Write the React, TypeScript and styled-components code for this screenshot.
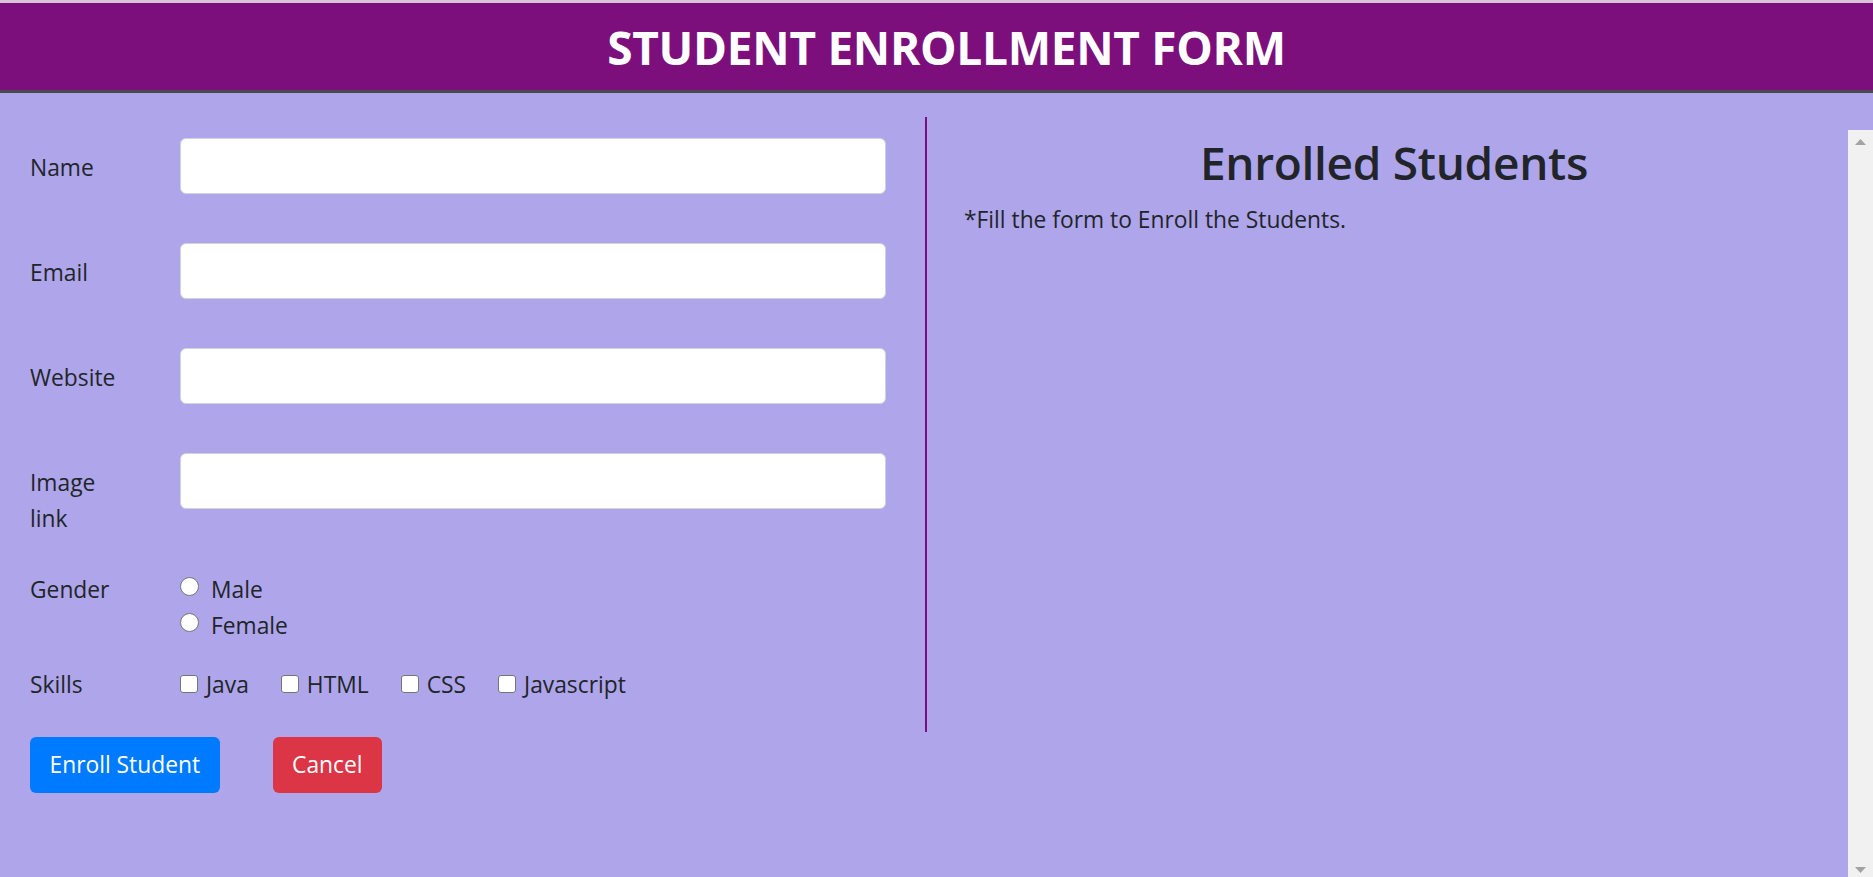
import React from "react";
import styled, { createGlobalStyle } from "styled-components";

const GlobalStyle = createGlobalStyle`
  html, body {
    margin: 0;
    padding: 0;
    background: #aea5ea;
  }
  body {
    font-family: "Open Sans", "Noto Sans", "Liberation Sans", sans-serif;
    color: #212529;
    font-size: 22.8px;
    line-height: 36px;
  }
  * { box-sizing: border-box; }
`;

const Page = styled.div`
  position: relative;
  min-height: 100vh;
  background: #aea5ea;
  overflow: hidden;
`;

const Header = styled.header`
  border-top: 3px solid #d6c6d9;
  border-bottom: 3px solid #4a4a4e;
  background: #7c0f7c;
  height: 93px;
  display: flex;
  align-items: center;
  justify-content: center;
  padding-left: 20px;
`;

const Title = styled.h1`
  margin: 0;
  color: #ffffff;
  font-size: 46px;
  font-weight: 700;
  line-height: 60px;
  letter-spacing: -0.3px;
`;

const Main = styled.main`
  display: flex;
  flex-direction: column;
  padding-top: 24px;
`;

const Columns = styled.div`
  display: flex;
  align-items: stretch;
`;

const FormColumn = styled.section`
  width: 927px;
  flex: none;
  border-right: 2.5px solid #7c0f7c;
  padding: 21px 39px 29px 30px;
  display: flex;
  flex-direction: column;
`;

const FieldRow = styled.div<{ $after: number }>`
  display: flex;
  align-items: flex-start;
  margin-bottom: ${(p) => p.$after}px;
`;

const Label = styled.label<{ $padTop?: number }>`
  width: 150px;
  flex: none;
  padding-top: ${(p) => (p.$padTop ?? 12)}px;
  padding-right: 52px;
  line-height: 36px;
`;

const TextInput = styled.input`
  flex: 1;
  height: 56px;
  border: 1.5px solid #ced4da;
  border-radius: 6px;
  background: #ffffff;
  font: inherit;
  padding: 0 18px;
  outline: none;
`;

const OptionStack = styled.div`
  display: flex;
  flex-direction: column;
`;

const OptionLine = styled.div`
  display: flex;
  align-items: flex-start;
`;

const Radio = styled.input.attrs({ type: "radio" })`
  appearance: none;
  -webkit-appearance: none;
  width: 19px;
  height: 19px;
  margin: 5px 12px 0 0;
  border: 1.5px solid #767676;
  border-radius: 50%;
  background: #ffffff;
  flex: none;
`;

const SkillList = styled.div`
  display: flex;
  align-items: flex-start;
  gap: 32px;
`;

const SkillItem = styled.label`
  display: flex;
  align-items: flex-start;
`;

const Checkbox = styled.input.attrs({ type: "checkbox" })`
  appearance: none;
  -webkit-appearance: none;
  width: 18px;
  height: 18px;
  margin: 8px 8px 0 0;
  border: 1.5px solid #767676;
  border-radius: 3px;
  background: #ffffff;
  flex: none;
`;

const OptionText = styled.span`
  line-height: 36px;
`;

const ListColumn = styled.section`
  flex: 1;
  padding: 16px 49px 0 37px;
`;

const ListTitle = styled.h2`
  margin: 0;
  text-align: center;
  font-size: 46px;
  font-weight: 600;
  line-height: 58px;
  letter-spacing: -0.3px;
`;

const Hint = styled.p`
  margin: 11px 0 0 0;
  line-height: 36px;
`;

const Actions = styled.div`
  display: flex;
  gap: 53px;
  padding: 5px 0 0 30px;
`;

const Button = styled.button<{ $variant: "primary" | "danger" }>`
  height: 56px;
  padding: 0 19.5px;
  border: none;
  border-radius: 6px;
  color: #ffffff;
  font: inherit;
  line-height: 36px;
  background: ${(p) => (p.$variant === "primary" ? "#007bff" : "#dc3545")};
  cursor: pointer;
`;

const Scrollbar = styled.div`
  position: absolute;
  right: 0;
  top: 130px;
  bottom: 0;
  width: 25px;
  background: #f1f1f1;
  display: flex;
  flex-direction: column;
  justify-content: space-between;
  align-items: center;
  padding: 9px 0 4px;
`;

const Arrow = styled.svg`
  width: 11px;
  height: 6px;
  display: block;
`;

const skills = ["Java", "HTML", "CSS", "Javascript"];

export default function App() {
  return (
    <Page>
      <GlobalStyle />
      <Header>
        <Title>STUDENT ENROLLMENT FORM</Title>
      </Header>
      <Main>
        <Columns>
          <FormColumn>
            <FieldRow $after={49}>
              <Label>Name</Label>
              <TextInput type="text" />
            </FieldRow>
            <FieldRow $after={49}>
              <Label>Email</Label>
              <TextInput type="email" />
            </FieldRow>
            <FieldRow $after={49}>
              <Label>Website</Label>
              <TextInput type="text" />
            </FieldRow>
            <FieldRow $after={35}>
              <Label>Image link</Label>
              <TextInput type="text" />
            </FieldRow>
            <FieldRow $after={23}>
              <Label $padTop={0}>Gender</Label>
              <OptionStack>
                <OptionLine>
                  <Radio name="gender" />
                  <OptionText>Male</OptionText>
                </OptionLine>
                <OptionLine>
                  <Radio name="gender" />
                  <OptionText>Female</OptionText>
                </OptionLine>
              </OptionStack>
            </FieldRow>
            <FieldRow $after={0}>
              <Label $padTop={0}>Skills</Label>
              <SkillList>
                {skills.map((s) => (
                  <SkillItem key={s}>
                    <Checkbox />
                    <OptionText>{s}</OptionText>
                  </SkillItem>
                ))}
              </SkillList>
            </FieldRow>
          </FormColumn>
          <ListColumn>
            <ListTitle>Enrolled Students</ListTitle>
            <Hint>*Fill the form to Enroll the Students.</Hint>
          </ListColumn>
        </Columns>
        <Actions>
          <Button $variant="primary">Enroll Student</Button>
          <Button $variant="danger">Cancel</Button>
        </Actions>
      </Main>
      <Scrollbar>
        <Arrow viewBox="0 0 11 6">
          <polygon points="5.5,0 11,6 0,6" fill="#a3a3a3" />
        </Arrow>
        <Arrow viewBox="0 0 11 6">
          <polygon points="0,0 11,0 5.5,6" fill="#a3a3a3" />
        </Arrow>
      </Scrollbar>
    </Page>
  );
}
